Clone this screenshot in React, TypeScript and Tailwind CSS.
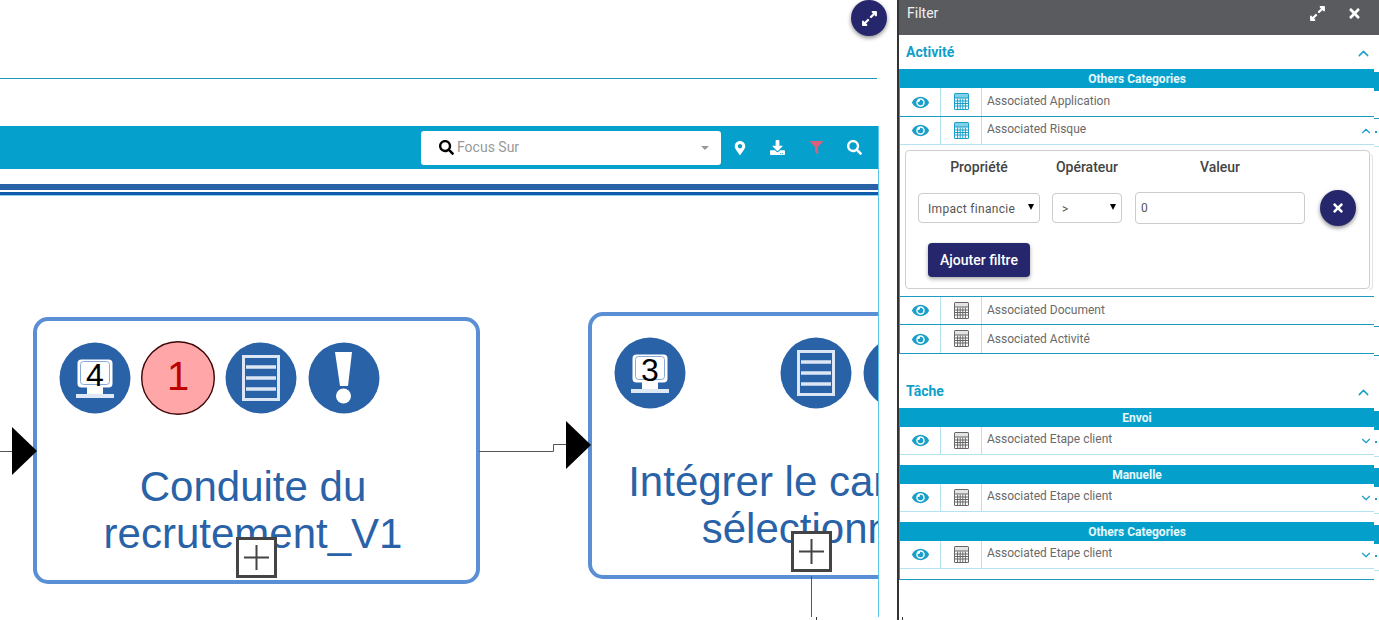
import React from 'react';
import { ChevronDown, ChevronUp } from 'lucide-react';
import { FaDownload, FaExpandAlt, FaEye, FaFilter, FaMapMarkerAlt, FaSearch, FaTimes } from 'react-icons/fa';

function Calc({ active }: { active?: boolean }) {
  const color = active ? '#1a9fc9' : '#666666';
  return (
    <svg width="15" height="17" viewBox="0 0 15 17" className="-mt-[1px]">
      <rect x="0" y="0" width="15" height="17" rx="1.5" fill={color} />
      <rect x="1" y="1" width="13" height="3.5" fill={active ? '#7fd0e8' : '#e4e4e4'} />
      <rect x="1" y="5.5" width="13" height="10.5" fill="#ffffff" />
      <path
        d="M1 8h13M1 10.5h13M1 13h13M3.6 5.5v10.5M6.2 5.5v10.5M8.8 5.5v10.5M11.4 5.5v10.5"
        stroke={color}
        strokeWidth="1"
      />
    </svg>
  );
}

function Band({ title }: { title: string }) {
  return (
    <div className="relative h-[19px] bg-[#04a0cb] text-center text-[12px] leading-[21px] font-bold text-[#e8f8fc]">
      {title}
      <div className="absolute left-full top-[3px] h-[19px] w-[5px] bg-[#04a0cb]" />
    </div>
  );
}

function Row({
  label,
  active,
  chevron,
  strong,
  h = 'h-[29px]',
  textTop = 'pt-[5px]',
}: {
  label: string;
  active?: boolean;
  chevron?: 'up' | 'down';
  strong?: boolean;
  h?: string;
  textTop?: string;
}) {
  const line = strong ? 'border-[#1a9ac0]' : 'border-[#b3e3f1]';
  return (
    <div className={`relative flex items-stretch border-b ${line} ${h}`}>
      <div className="flex w-[41px] items-center justify-center border-r border-[#b3e3f1] text-[#1a9fc9]">
        <FaEye size={17} />
      </div>
      <div className="flex w-[41px] items-center justify-center border-r border-[#b3e3f1]">
        <Calc active={active} />
      </div>
      <div className={`flex-1 pl-[5px] text-[12px] leading-[16px] text-[#6a6a6a] ${textTop}`}>{label}</div>
      {chevron === 'up' && <ChevronUp size={14} className="absolute right-[1px] top-[7px] text-[#1a9fc9]" />}
      {chevron === 'down' && <ChevronDown size={14} className="absolute right-[1px] top-[7px] text-[#1a9fc9]" />}
      <div className={`absolute left-full top-[3px] h-full w-[5px] border-b ${line}`}>
        {chevron && <span className="absolute left-[1px] top-[11px] h-[2px] w-[2px] bg-[#1a9fc9]" />}
      </div>
    </div>
  );
}

function SectionTitle({ title }: { title: string }) {
  return (
    <div className="relative h-[34px] pl-[7px] text-[14px] leading-[34px] font-bold text-[#0f9fc9]">
      {title}
      <ChevronUp size={17} className="absolute right-[2px] top-[10px] text-[#1a9fc9]" />
    </div>
  );
}

function NativeSelect({ value, width }: { value: string; width: string }) {
  return (
    <div className={`relative h-[30px] ${width}`}>
      <select
        className="h-full w-full appearance-none rounded border border-[#cccccc] bg-white pt-[1px] pr-[24px] pl-[9px] text-[12px] tracking-[0.3px] text-[#555555]"
        defaultValue={value}
      >
        <option value={value}>{value}</option>
      </select>
      <span className="absolute right-[6px] top-[11px] h-0 w-0 border-x-[3.5px] border-t-[6px] border-x-transparent border-t-black" />
    </div>
  );
}

function FilterEditor() {
  return (
    <div className="relative mt-[5px] mr-[4px] mb-[7px] ml-[5px] h-[139px] rounded border border-[#cfcfcf] bg-white pl-[12px]">
      <div className="absolute left-full top-[3px] h-[136px] w-[4px] rounded-r border-y border-r border-[#e2e2e2]" />
      <div className="flex pt-[7px] text-center text-[14px] leading-[18px] font-medium text-[#444444]">
        <div className="w-[122px]">Propriété</div>
        <div className="ml-[12px] w-[70px]">Opérateur</div>
        <div className="ml-[13px] w-[170px]">Valeur</div>
      </div>
      <div className="mt-[14px] flex items-center">
        <NativeSelect value="Impact financier" width="w-[122px]" />
        <div className="ml-[12px]">
          <NativeSelect value=">" width="w-[70px]" />
        </div>
        <input
          className="ml-[13px] h-[32px] w-[170px] rounded border border-[#cccccc] bg-white pl-[5px] text-[12px] text-[#555555]"
          defaultValue="0"
          readOnly
        />
        <button className="ml-[15px] flex h-[36px] w-[36px] items-center justify-center rounded-full bg-[#26266c] text-white shadow-[0_2px_4px_rgba(0,0,0,0.45)]">
          <FaTimes size={14} />
        </button>
      </div>
      <button className="mt-[17px] ml-[10px] block h-[34px] w-[102px] rounded bg-[#26266c] text-[14px] font-medium text-white shadow-[0_2px_4px_rgba(0,0,0,0.35)]">
        Ajouter filtre
      </button>
    </div>
  );
}

function FilterPanel() {
  return (
    <aside className="flex h-full w-[482px] flex-col overflow-hidden border-l-2 border-[#333333] bg-white font-['Roboto',sans-serif]">
      <div className="-ml-[2px] flex h-[35px] shrink-0 items-center bg-[#5a5b5f] pl-[10px] text-white">
        <span className="flex-1 pb-[9px] text-[14px] leading-[18px] text-[#f1f1f1]">Filter</span>
        <FaExpandAlt size={17} className="mb-[9px]" />
        <FaTimes size={15} className="mr-[17px] mb-[9px] ml-[21px]" />
      </div>

      <div className="w-[475px]">
        <SectionTitle title="Activité" />
        <div className="border-l border-[#1a9ac0]">
          <Band title="Others Categories" />
          <Row label="Associated Application" active strong />
          <Row label="Associated Risque" active chevron="up" h="h-[28px]" textTop="pt-[4px]" />
          <FilterEditor />
          <div className="border-t border-[#1a9ac0]">
            <Row label="Associated Document" strong h="h-[28px]" />
          </div>
          <Row label="Associated Activité" strong h="h-[29px]" textTop="pt-[6px]" />
        </div>

        <div className="h-[20px]" />
        <SectionTitle title="Tâche" />
        <div className="border-b border-l border-[#1a9ac0] pb-[10px]">
          <Band title="Envoi" />
          <Row label="Associated Etape client" chevron="down" h="h-[28px]" textTop="pt-[4px]" />
          <div className="h-[10px]" />
          <Band title="Manuelle" />
          <Row label="Associated Etape client" chevron="down" h="h-[28px]" textTop="pt-[4px]" />
          <div className="h-[10px]" />
          <Band title="Others Categories" />
          <Row label="Associated Etape client" chevron="down" h="h-[28px]" textTop="pt-[4px]" />
        </div>
      </div>
    </aside>
  );
}

function Toolbar() {
  return (
    <div className="flex h-[43px] shrink-0 items-center bg-[#05a0cb] pr-[16px] font-['Roboto',sans-serif] text-white">
      <div className="ml-auto flex h-[34px] w-[300px] items-center rounded-[3px] bg-white pl-[18px] pr-[12px]">
        <FaSearch size={15} className="text-black" />
        <span className="ml-[3px] flex-1 text-[14px] text-[#999999]">Focus Sur</span>
        <span className="h-0 w-0 border-x-[4px] border-t-[4px] border-x-transparent border-t-[#999999]" />
      </div>
      <FaMapMarkerAlt size={14} className="ml-[12px]" />
      <FaDownload size={15} className="ml-[23px]" />
      <FaFilter size={13} className="ml-[25px] text-[#d9607a]" />
      <FaSearch size={15} className="ml-[24px]" />
    </div>
  );
}

function Screen({ value }: { value: number }) {
  return (
    <div className="relative h-[72px] w-[72px] shrink-0">
      <svg width="72" height="72" viewBox="0 0 72 72">
        <circle cx="36" cy="36" r="35.5" fill="#2a62a8" />
        <rect x="18.5" y="17.5" width="35" height="28" rx="4" fill="#ffffff" />
        <rect x="21.5" y="19.5" width="29" height="23" rx="3" fill="#ffffff" stroke="#8aaad6" />
        <rect x="28" y="45" width="16" height="7" fill="#ffffff" />
        <rect x="17" y="52" width="38" height="4" fill="#dfe8f5" />
      </svg>
      <span className="absolute inset-x-0 top-[15px] text-center font-['Liberation_Sans',sans-serif] text-[32px] leading-[37px] text-black">
        {value}
      </span>
    </div>
  );
}

function Alert({ value }: { value: number }) {
  return (
    <div className="relative h-[72px] w-[72px] shrink-0 overflow-visible">
      <svg width="74" height="74" viewBox="0 0 74 74" className="-mt-[1px] -ml-[1px]">
        <circle cx="37" cy="37" r="36.3" fill="#ffa6a9" stroke="#3d0606" strokeWidth="1.4" />
      </svg>
      <span className="absolute inset-x-0 top-[11px] text-center font-['Liberation_Sans',sans-serif] text-[40px] leading-[46px] text-[#c00000]">
        {value}
      </span>
    </div>
  );
}

function DocBadge() {
  return (
    <svg width="72" height="72" viewBox="0 0 72 72" className="shrink-0 blur-[0.6px]">
      <circle cx="36" cy="36" r="35.5" fill="#2a62a8" />
      <rect x="18.5" y="14.5" width="35" height="43" fill="none" stroke="#dce6f5" strokeWidth="3" />
      <path d="M21 25h30M21 36h30M21 47h30" stroke="#dce6f5" strokeWidth="3.5" />
    </svg>
  );
}

function WarnBadge() {
  return (
    <svg width="72" height="72" viewBox="0 0 72 72" className="shrink-0 blur-[0.6px]">
      <circle cx="36" cy="36" r="35.5" fill="#2a62a8" />
      <path d="M27 10h17l-4 34h-8z" fill="#ffffff" />
      <circle cx="35.5" cy="54" r="7.5" fill="#ffffff" />
    </svg>
  );
}

function Plus({ className }: { className: string }) {
  return (
    <div className={`absolute flex h-[41px] w-[41px] items-center justify-center border-[3px] border-[#444444] bg-white ${className}`}>
      <svg width="27" height="27" viewBox="0 0 27 27">
        <path d="M13.5 1v25M1 13.5h25" stroke="#444444" strokeWidth="2" />
      </svg>
    </div>
  );
}

function Node({
  className,
  lines,
  children,
}: {
  className: string;
  lines: string[];
  children: React.ReactNode;
}) {
  return (
    <div className={`absolute h-[267px] w-[447px] rounded-[15px] border-4 border-[#5b8fd5] bg-white pt-[21px] pl-[22px] ${className}`}>
      <div className="flex h-[72px] gap-[11px]">{children}</div>
      <div className="mt-[49px] -ml-[29px] text-center font-['Liberation_Sans',sans-serif] text-[42px] leading-[47px] whitespace-nowrap text-[#2a62a8]">
        {lines.map(l => (
          <div key={l}>{l}</div>
        ))}
      </div>
    </div>
  );
}

function Arrow({ className }: { className: string }) {
  return <div className={`absolute h-0 w-0 border-y-[24px] border-l-[25px] border-y-transparent border-l-black ${className}`} />;
}

// free canvas: node and connector places are the content, top is page y - 195
function Diagram() {
  return (
    <div className="relative flex-1 overflow-hidden bg-white">
      <div className="absolute inset-x-0 top-0 h-[1px] bg-[#8fd0f0]" />
      <div className="absolute left-0 top-[256px] h-[1px] w-[12px] bg-[#555555]" />
      <Node className="left-[33px] top-[122px]" lines={['Conduite du', 'recrutement_V1']}>
        <Screen value={4} />
        <Alert value={1} />
        <DocBadge />
        <WarnBadge />
      </Node>
      <Arrow className="left-[12px] top-[232px]" />
      <Plus className="left-[236px] top-[342px]" />

      <svg className="absolute left-[479px] top-[246px]" width="90" height="12" viewBox="0 0 90 12">
        <path d="M0 10.5h74.5v-7H88" fill="none" stroke="#555555" strokeWidth="1" />
      </svg>
      <Node className="left-[588px] top-[117px]" lines={['Intégrer le candidat', 'sélectionné']}>
        <Screen value={3} />
        <div className="w-[72px] shrink-0" />
        <DocBadge />
        <WarnBadge />
      </Node>
      <Arrow className="left-[566px] top-[226px]" />
      <Plus className="left-[791px] top-[336px]" />
      <div className="absolute left-[811px] top-[381px] h-[50px] w-[1px] bg-[#555555]" />
    </div>
  );
}

export default function App() {
  return (
    <div className="flex h-[620px] w-[1379px] overflow-hidden bg-white">
      <main className="relative h-full w-[897px] shrink-0">
        <div className="flex h-full w-[879px] flex-col">
          <div className="h-[79px] w-[877px] shrink-0 border-b border-[#1f95b8]" />
          <div className="h-[47px] shrink-0" />
          <div className="flex h-[491px] flex-col border-r border-[#5bc5ea]">
            <Toolbar />
            <div className="h-[15px] shrink-0" />
            <div className="h-[6px] shrink-0 bg-[#2a62a8]" />
            <div className="h-[2px] shrink-0" />
            <div className="h-[3px] shrink-0 bg-[#0f5cad]" />
            <Diagram />
          </div>
        </div>
        <button className="absolute left-[851px] top-0 flex h-[36px] w-[36px] items-center justify-center rounded-full bg-[#26266c] text-white shadow-[0_2px_4px_rgba(0,0,0,0.45)]">
          <FaExpandAlt size={17} />
        </button>
        <div className="absolute bottom-0 left-[816px] h-[3px] w-[1px] bg-[#333333]" />
        <div className="absolute bottom-0 left-[902px] z-10 h-[3px] w-[1px] bg-[#333333]" />
      </main>
      <FilterPanel />
    </div>
  );
}
